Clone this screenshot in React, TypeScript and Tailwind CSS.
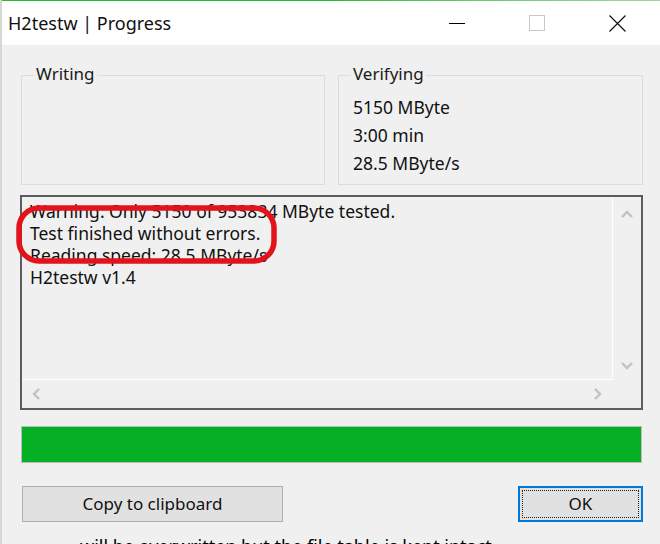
import React from "react";

const font = { fontFamily: '"Noto Sans", "Open Sans", "Liberation Sans", sans-serif' };

function Chevron({ dir }: { dir: "up" | "down" | "left" | "right" }) {
  const pts: Record<string, string> = {
    up: "2,8 7,3 12,8",
    down: "2,3 7,8 12,3",
    left: "8,2 3,7 8,12",
    right: "3,2 8,7 3,12",
  };
  const vert = dir === "up" || dir === "down";
  return (
    <svg width={vert ? 14 : 11} height={vert ? 11 : 14} viewBox={vert ? "0 0 14 11" : "0 0 11 14"}>
      <polyline points={pts[dir]} fill="none" stroke="#c2c2c2" strokeWidth="2.4" />
    </svg>
  );
}

function GroupBox({ label, width, children }: { label: string; width: string; children?: React.ReactNode }) {
  return (
    <div className={`relative h-[110px] border border-[#dcdcdc] ${width}`}>
      <span className="absolute -top-[13px] left-[12px] bg-[#f0f0f0] px-[2px] text-[17px] leading-[22px] text-[#1a1a1a]">
        {label}
      </span>
      {children}
    </div>
  );
}

export default function App() {
  return (
    <div className="relative w-[660px] h-[544px] overflow-hidden bg-[#f0f0f0] border-l-2 border-[#d6d6d6]" style={font}>
      <div className="h-[1px] bg-gradient-to-r from-[#1fbf30] via-[#1fbf30] to-[#9fd4a8]" />
      <div className="flex h-[44px] items-center bg-white">
        <span className="ml-[6px] text-[18px] text-[#111]">H2testw | Progress</span>
        <div className="flex-1" />
        <div className="flex h-full w-[80px] items-center justify-center">
          <div className="h-[1px] w-[16px] bg-black" />
        </div>
        <div className="flex h-full w-[80px] items-center justify-center">
          <div className="h-[16px] w-[16px] border border-[#c8c8c8]" />
        </div>
        <div className="mr-[3px] flex h-full w-[80px] items-center justify-center">
          <svg width="17" height="17" viewBox="0 0 17 17">
            <path d="M0.5 0.5 L16.5 16.5 M16.5 0.5 L0.5 16.5" stroke="#111" strokeWidth="1.2" />
          </svg>
        </div>
      </div>

      <div className="flex flex-col pl-[18px] pt-[30px]">
        <div className="ml-[1px] flex gap-[13px]">
          <GroupBox label="Writing" width="w-[304px]" />
          <GroupBox label="Verifying" width="w-[305px]">
            <div className="pl-[14px] pt-[17px] text-[17.5px] leading-[28px] text-[#111]">
              <div>5150 MByte</div>
              <div>3:00 min</div>
              <div>28.5 MByte/s</div>
            </div>
          </GroupBox>
        </div>

        <div className="mt-[10px] flex h-[215px] w-[623px] flex-col border-2 border-[#5c5c5c]">
          <div className="flex flex-1">
            <div className="flex-1 border-b border-r border-white pl-[8px] pt-[3px] text-[17.5px] leading-[22px] text-[#111]">
              <div>Warning: Only 5150 of 953834 MByte tested.</div>
              <div>Test finished without errors.</div>
              <div>Reading speed: 28.5 MByte/s</div>
              <div>H2testw v1.4</div>
            </div>
            <div className="flex w-[28px] flex-col items-center justify-between pb-[9px] pt-[12px]">
              <Chevron dir="up" />
              <Chevron dir="down" />
            </div>
          </div>
          <div className="flex h-[28px]">
            <div className="flex flex-1 items-center justify-between pl-[9px] pr-[10px]">
              <Chevron dir="left" />
              <Chevron dir="right" />
            </div>
            <div className="w-[28px]" />
          </div>
        </div>

        <div className="ml-[1px] mt-[16px] h-[37px] w-[621px] border border-[#bcbcbc] bg-[#06b025]" />

        <div className="mt-[23px] flex items-center">
          <button className="ml-[2px] h-[36px] w-[261px] border border-[#adadad] bg-[#e1e1e1] text-[17px] text-[#111]">
            Copy to clipboard
          </button>
          <div className="flex-1" />
          <button className="mr-[17px] flex h-[36px] w-[125px] items-center justify-center border-2 border-[#0078d7] bg-[#e1e1e1] p-[2px] text-[17px] text-[#111]">
            <span className="flex h-full w-full items-center justify-center border border-dotted border-[#222]">OK</span>
          </button>
        </div>

        <div className="ml-[60px] mt-[12px] whitespace-nowrap text-[18px] leading-[24px] text-black">
          will be overwritten but the file table is kept intact
        </div>
      </div>

      <svg className="absolute left-[14px] top-[205px]" width="262" height="60" viewBox="0 0 262 60">
        <rect x="3" y="3" width="255" height="53" rx="20" fill="none" stroke="#e3121b" strokeWidth="5.5" />
      </svg>
    </div>
  );
}
